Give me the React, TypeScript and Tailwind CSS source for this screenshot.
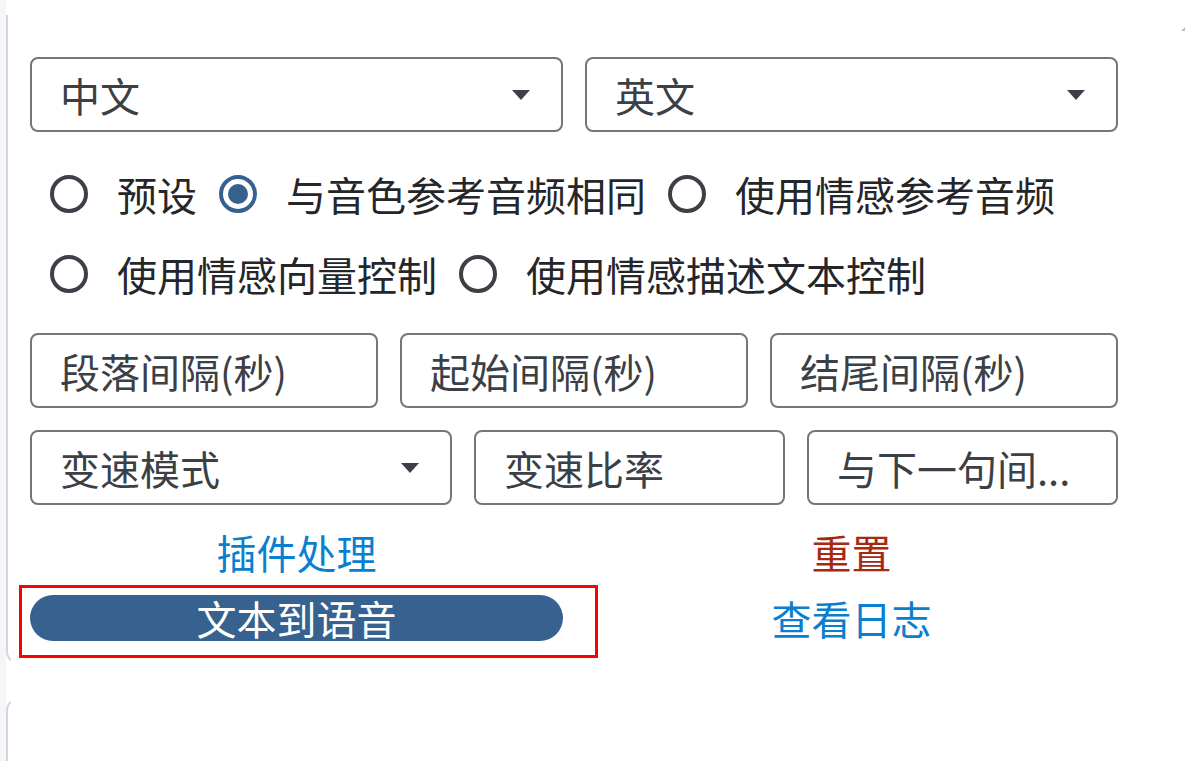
import React from "react";

const FONT = { fontFamily: '"Noto Sans CJK SC", "Noto Sans", sans-serif' };

function Caret() {
  return (
    <svg width="18" height="10" viewBox="0 0 18 10" className="shrink-0">
      <polygon points="0,0 18,0 9,10" fill="#3d4047" />
    </svg>
  );
}

function Select({ label }: { label: string }) {
  return (
    <div className="flex h-[75px] items-center justify-between rounded-[8px] border-2 border-[#72767e] pl-[28px] pr-[31px] text-[40px] leading-[56px] text-[#3b3f46]">
      <span>{label}</span>
      <Caret />
    </div>
  );
}

function Field({ label }: { label: string }) {
  return (
    <div className="flex h-[75px] min-w-0 items-center rounded-[8px] border-2 border-[#72767e] pl-[28px] pr-[20px] text-[40px] leading-[56px] text-[#3b3f46]">
      <span className="block min-w-0 whitespace-nowrap">{label}</span>
    </div>
  );
}

function Radio({ label, checked }: { label: string; checked?: boolean }) {
  return (
    <div className="flex h-[56px] items-center gap-[29px]">
      {checked ? (
        <span className="flex h-[38px] w-[38px] shrink-0 items-center justify-center rounded-full border-[4px] border-[#36618f]">
          <span className="h-[20px] w-[20px] rounded-full bg-[#36618f]" />
        </span>
      ) : (
        <span className="h-[38px] w-[38px] shrink-0 rounded-full border-[4px] border-[#3d4047]" />
      )}
      <span className="text-[40px] leading-[56px] text-[#24262a]">{label}</span>
    </div>
  );
}

export default function App() {
  return (
    <div className="relative flex h-[761px] w-[1186px] overflow-hidden bg-white" style={FONT}>
      <div className="w-[6px] shrink-0 bg-[#f5f6fa]" />
      <div className="flex flex-1 flex-col">
        <div className="mt-[15px] h-[650px] rounded-bl-[14px] border-b-2 border-l-2 border-b-transparent border-l-[#d3d6dc] pl-[22px] pt-[42px]">
          <div className="w-[1088px]">
            <div className="grid grid-cols-2 gap-x-[22px]">
              <Select label="中文" />
              <Select label="英文" />
            </div>

            <div className="mt-[34px] flex flex-wrap gap-x-[22px] gap-y-[24px] pl-[20px]">
              <Radio label="预设" />
              <Radio label="与音色参考音频相同" checked />
              <Radio label="使用情感参考音频" />
              <Radio label="使用情感向量控制" />
              <Radio label="使用情感描述文本控制" />
            </div>

            <div className="mt-[31px] grid grid-cols-3 gap-x-[22px]">
              <Field label="段落间隔(秒)" />
              <Field label="起始间隔(秒)" />
              <Field label="结尾间隔(秒)" />
            </div>

            <div className="mt-[22px] grid grid-cols-[422px_1fr_1fr] gap-x-[22px]">
              <Select label="变速模式" />
              <Field label="变速比率" />
              <Field label="与下一句间..." />
            </div>

            <div className="mt-[19px] grid grid-cols-2 gap-x-[22px] gap-y-[10px] text-[40px] leading-[56px]">
              <div className="text-center text-[#0a7fd0]">插件处理</div>
              <div className="text-center text-[#a62a12]">重置</div>
              <div className="relative flex h-[56px] items-center">
                <div className="flex h-[46px] w-full items-center justify-center rounded-full bg-[#37628f] text-white">
                  文本到语音
                </div>
                <div className="pointer-events-none absolute -bottom-[12px] -left-[11px] -right-[35px] -top-[5px] border-[3px] border-[#ff0000]" />
              </div>
              <div className="text-center text-[#0a7fd0]">查看日志</div>
            </div>
          </div>
        </div>
        <div className="mt-[32px] flex-1 rounded-tl-[14px] border-l-2 border-t-2 border-l-[#d3d6dc] border-t-transparent" />
      </div>
      <svg className="absolute right-[1px] top-[27px]" width="4" height="4" viewBox="0 0 4 4">
        <polygon points="4,0 4,4 0,4" fill="#b8bbc0" />
      </svg>
    </div>
  );
}
